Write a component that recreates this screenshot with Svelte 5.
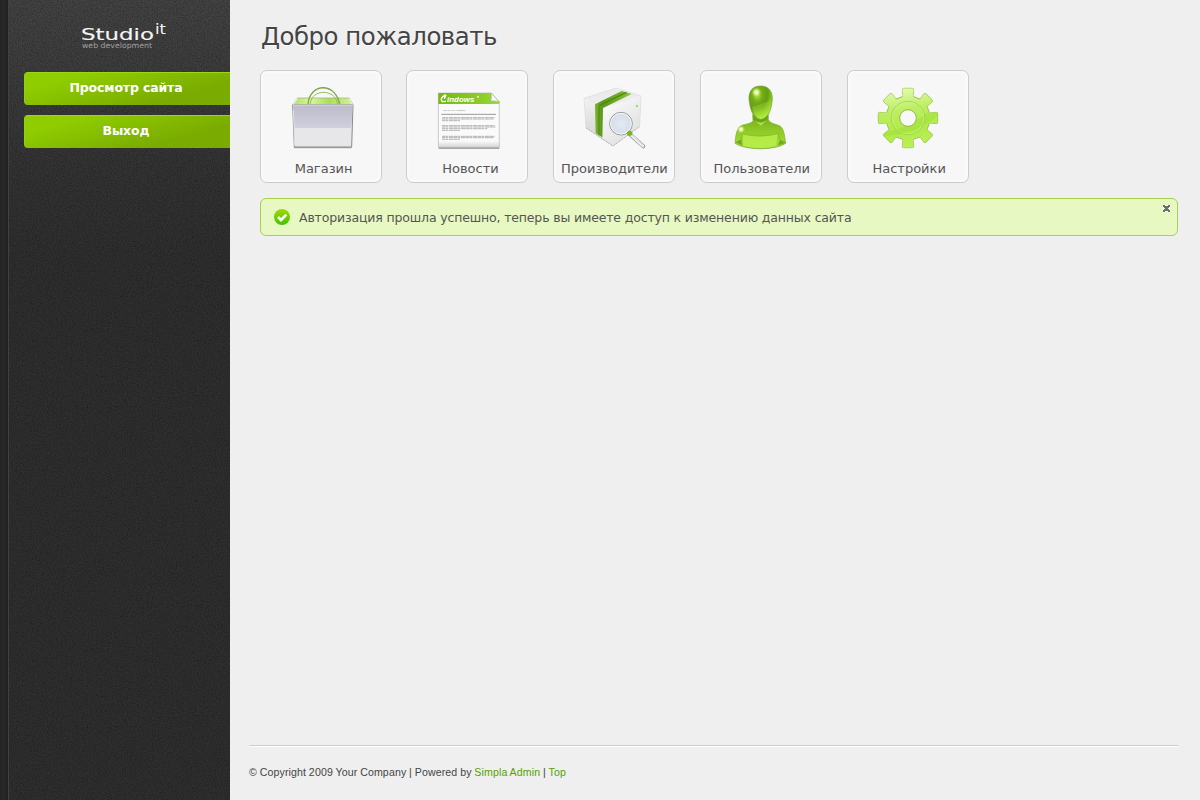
<script>
  const cards = [
    { id: 'shop', label: 'Магазин', box: '18 33 360 264' },
    { id: 'news', label: 'Новости', box: '21 33 360 264' },
    { id: 'makers', label: 'Производители', box: '18 33 360 264' },
    { id: 'users', label: 'Пользователи', box: '18 33 360 264' },
    { id: 'settings', label: 'Настройки', box: '24 33 360 264' }
  ];
  const angles = [0, 45, 90, 135, 180, 225, 270, 315];
  const newsLines = [173, 177, 182, 197, 201, 206, 211, 229, 233, 238];
  const newsEnds = [284, 282, 180, 284, 286, 262, 180, 284, 282, 180];
</script>

<div class="page">
  <aside>
    <svg class="grain" width="230" height="800" aria-hidden="true">
      <filter id="noise" x="0" y="0" width="100%" height="100%">
        <feTurbulence type="fractalNoise" baseFrequency="0.8" numOctaves="2" seed="4" />
        <feColorMatrix type="matrix" values="0 0 0 0 0  0 0 0 0 0  0 0 0 0 0  0.6 0 0 0 -0.21" />
      </filter>
      <rect x="9" width="221" height="800" filter="url(#noise)" />
    </svg>
    <div class="inner">
      <svg class="logo" width="90" height="30" viewBox="0 0 90 30">
        <text x="1" y="19" font-size="16.5" fill="#f4f4f4" stroke="#f4f4f4" stroke-width=".15" textLength="73" lengthAdjust="spacingAndGlyphs">Studio</text>
        <text x="75" y="12.5" font-size="14" fill="#f4f4f4" textLength="11" lengthAdjust="spacingAndGlyphs">it</text>
        <text x="2" y="26.5" font-size="7.5" fill="#a0a0a0" textLength="70" lengthAdjust="spacingAndGlyphs">web development</text>
      </svg>
      <nav>
        <a href="#site">Просмотр сайта</a>
        <a href="#exit">Выход</a>
      </nav>
    </div>
  </aside>

  <main>
    <h1>Добро пожаловать</h1>
    <ul class="cards">
      {#each cards as card}
        <li class={card.id}>
          <svg width="120" height="88" viewBox={card.box}>
            {#if card.id === 'shop'}
              <defs>
                <linearGradient id="bagTop" x2="0" y2="1"><stop stop-color="#bbbbc9" /><stop offset="1" stop-color="#cfcfdd" /></linearGradient>
                <linearGradient id="bagIn"><stop stop-color="#b5df69" /><stop offset=".3" stop-color="#d5f797" /><stop offset=".6" stop-color="#aade58" /><stop offset="1" stop-color="#d3f496" /></linearGradient>
              </defs>
              <path d="M114 134 127 114H283L294 134Z" fill="url(#bagIn)" stroke="#a1a78f" stroke-width="2" />
              <path d="M159 132C165 69 240 65 254 132" fill="none" stroke="#83a344" stroke-width="4" />
              <path d="M166 132C169 84 244 87 247 132" fill="none" stroke="#98bc5b" stroke-width="3" />
              <path d="M117 263H290" stroke="#aaa" stroke-width="4" />
              <path d="M113 134H294L290 261H118Z" fill="#e7e7e9" stroke="#8a8a8d" stroke-width="3" />
              <path d="M115 135H292L290 204H118Z" fill="url(#bagTop)" />
              <path d="M114 135H293M119 257 115 150" fill="none" stroke="#f6f6f6" stroke-width="2" />
              <path d="m127 115-11 18M282 115l10 18" stroke="#f4fbe5" stroke-width="3" />
            {:else if card.id === 'news'}
              <defs>
                <linearGradient id="paper" x2="0" y2="1"><stop offset=".88" stop-color="#fafafa" /><stop offset="1" stop-color="#d5d5d5" /></linearGradient>
                <linearGradient id="band"><stop stop-color="#77b914" /><stop offset=".7" stop-color="#8bcc28" /><stop offset="1" stop-color="#9bdc35" /></linearGradient>
              </defs>
              <path d="M116 264H298" stroke="#8d8d8d" stroke-width="4" />
              <path d="M115 99H274L298 125V262H115Z" fill="url(#paper)" stroke="#b7b7b7" stroke-width="2" />
              <path d="M115 99H274L298 125V132H115Z" fill="url(#band)" />
              <path d="M274 99c0 14-1 20-1 25 8-2 18-1 25 2Z" fill="#fafafa" stroke="#a4b78e" stroke-width="2" />
              <path d="M137 104q-20 11-10 21l11-1M138 105l-5 11" fill="none" stroke="white" stroke-width="4" />
              <text x="141" y="125" class="masthead" textLength="82" lengthAdjust="spacingAndGlyphs">indows</text>
              <circle cx="234" cy="110" r="3" fill="#e9f9cb" />
              <text x="129" y="153" class="caption" textLength="68">This is a free illustration</text>
              <path d="M124 163H288" stroke="#999" stroke-width="3" />
              {#each newsLines as y, i}
                <path d={`M126 ${y}H${newsEnds[i]}`} stroke="#a5a5a5" stroke-width="2.5" stroke-dasharray="11 1 6 2 15 1" />
              {/each}
            {:else if card.id === 'makers'}
              <defs>
                <linearGradient id="boxLeft" x2="0" y2="1"><stop stop-color="#f1f1f1" /><stop offset="1" stop-color="#cfcfcf" /></linearGradient>
                <linearGradient id="boxRight" x2=".7" y2="1"><stop stop-color="#fff" /><stop offset="1" stop-color="#dedede" /></linearGradient>
                <linearGradient id="ribbon"><stop stop-color="#7bb52d" /><stop offset=".2" stop-color="#5b981b" /><stop offset=".6" stop-color="#70ad26" /><stop offset="1" stop-color="#8cc63e" /></linearGradient>
                <radialGradient id="lens"><stop stop-color="#e2eaf4" /><stop offset="1" stop-color="#d3dce8" /></radialGradient>
              </defs>
              <path d="M108 115 205 84 279 108 167 151Z" fill="#ececec" />
              <path d="M108 115 167 151 195 258 114 204Z" fill="url(#boxLeft)" />
              <path d="M165 144 279 108 275 199 195 258 163 235Z" fill="url(#boxRight)" />
              <path d="M108 115 205 84 279 108 275 199 195 258 114 204Z" fill="none" stroke="#d2d2d2" stroke-width="1.5" />
              <path d="M114 204 195 258 275 200" fill="none" stroke="#888" stroke-width="2" stroke-dasharray="3 3" />
              <path d="M141 133 221 93 251 102 165 144 163 232 143 220Z" fill="url(#ribbon)" />
              <path d="M153 137 235 97" stroke="#4f8716" stroke-width="4" />
              <path d="M153 139V226" stroke="#4f8716" stroke-width="3" />
              <circle cx="267" cy="138" r="3" fill="#8dcc38" />
              <path d="m248 225 38 34" stroke="#999" stroke-width="12" stroke-linecap="round" />
              <path d="m249 225 36 33" stroke="#f8f8f8" stroke-width="8" stroke-linecap="round" />
              <path d="m252 226 34 32" stroke="#bbb" stroke-width="2" />
              <circle cx="219" cy="191" r="34" fill="url(#lens)" stroke="#999" stroke-width="3" />
              <circle cx="219" cy="191" r="31" fill="none" stroke="#f8f8f8" stroke-width="3" />
              <circle cx="245" cy="220" r="8" fill="#70b91e" />
            {:else if card.id === 'users'}
              <defs>
                <radialGradient id="head" cx=".35" cy=".25" r=".9"><stop stop-color="#b8e745" /><stop offset=".25" stop-color="#74ad19" /><stop offset=".5" stop-color="#639d14" /><stop offset=".8" stop-color="#a0dc2b" /><stop offset="1" stop-color="#8ac51f" /></radialGradient>
                <linearGradient id="face" x1=".3" x2=".6" y2="1"><stop stop-color="#8cc626" stop-opacity=".2" /><stop offset="1" stop-color="#b2ee42" /></linearGradient>
                <linearGradient id="body" x2="0" y2="1"><stop stop-color="#71aa18" /><stop offset=".5" stop-color="#91cb28" /><stop offset="1" stop-color="#a5dc37" /></linearGradient>
                <radialGradient id="shine"><stop stop-color="white" /><stop offset=".3" stop-color="#eaffb5" /><stop offset="1" stop-color="#a9dd3b" stop-opacity="0" /></radialGradient>
              </defs>
              <path d="M120 250q75 36 153 0-76 12-153 0" fill="#aaa" opacity=".5" />
              <path d="M173 164h47v15c5 10 19 13 34 18 13 8 15 31 18 53-27 21-122 22-152 0 2-24 5-48 21-54 15-5 28-5 33-14Z" fill="url(#body)" stroke="#7bab32" stroke-width="2" />
              <path d="M175 164h42v14l-20 15-21-13Z" fill="#6ba21a" />
              <path d="M178 181q18 13 38-1l-18 17Z" fill="#abe341" />
              <path d="M143 222q54 14 105-1l-4 36q-47 14-99 0Z" fill="#bbf04e" opacity=".8" />
              <path d="m122 247 16-9 4 19ZM272 248l-17-9-6 18Z" fill="#568e14" opacity=".6" />
              <path d="M143 222q51 13 105-1M138 238l5-19M254 238l-5-19" fill="none" stroke="#7fb629" stroke-width="2" />
              <path d="M197 78c25 0 36 18 35 40-2 20-7 57-35 61-28-6-32-39-35-61-1-25 11-40 35-40Z" fill="url(#head)" stroke="#759b32" stroke-width="2" />
              <path d="M171 140q29-4 58-24-2 54-31 61-20-5-27-37Z" fill="url(#face)" />
              <circle cx="184" cy="97" r="15" fill="url(#shine)" />
              <circle cx="138" cy="208" r="13" fill="url(#shine)" />
            {:else}
              <defs>
                <linearGradient id="gear" gradientUnits="userSpaceOnUse" x1="190" y1="84" x2="220" y2="264"><stop stop-color="#e2fbb0" /><stop offset=".35" stop-color="#bdee62" /><stop offset=".7" stop-color="#b0eb48" /><stop offset="1" stop-color="#bcf05c" /></linearGradient>
                <path id="tooth" d="M174 122c9-5 15-9 15-16l-2-17q0-4 4-4h26q4 0 4 4l-2 17c0 7 6 11 15 16Z" />
                <clipPath id="gearClip">
                  <circle cx="204" cy="174" r="64" />
                  {#each angles as a}
                    <use href="#tooth" transform={`rotate(${a} 204 174)`} />
                  {/each}
                </clipPath>
              </defs>
              <g fill="#b9ec61" stroke="#94bd4c" stroke-width="3" stroke-linejoin="round">
                {#each angles as a}
                  <use href="#tooth" transform={`rotate(${a} 204 174)`} />
                {/each}
                <circle cx="204" cy="174" r="66" />
              </g>
              <g clip-path="url(#gearClip)">
                <rect x="110" y="80" width="188" height="188" fill="url(#gear)" />
                <path d="M110 220q90-5 188-90v34q-70 62-188 67Z" fill="#93d42c" opacity=".3" />
              </g>
              <circle cx="204" cy="174" r="50" fill="none" stroke="#94c448" stroke-width="2" />
              <circle cx="204" cy="174" r="48" fill="none" stroke="#caf37e" stroke-width="2" />
              <circle cx="204" cy="174" r="25" fill="#f8f8f8" stroke="#8fba46" stroke-width="3" />
            {/if}
          </svg>
          <span>{card.label}</span>
        </li>
      {/each}
    </ul>

    <div class="notice">
      <svg class="tick" width="16" height="16" viewBox="0 0 16 16">
        <defs><linearGradient id="ok" x2="0" y2="1"><stop stop-color="#a4d900" /><stop offset="1" stop-color="#3fc400" /></linearGradient></defs>
        <circle cx="8" cy="8" r="8" fill="url(#ok)" />
        <path d="m4 8 3 3 5.3-5.4" fill="none" stroke="white" stroke-width="2.7" />
      </svg>
      <p>Авторизация прошла успешно, теперь вы имеете доступ к изменению данных сайта</p>
      <svg class="close" width="7" height="7" viewBox="0 0 7 7" shape-rendering="crispEdges">
        <path d="M0 0h2v1h3V0h2v2H6v1H5v1h1v1h1v2H5V6H2v1H0V5h1V4h1V3H1V2H0Z" fill="#707070" />
        <path d="M2 0h3v1H2ZM2 6h3v1H2ZM0 2h1v3H0ZM6 2h1v3H6Z" fill="white" />
      </svg>
    </div>

    <footer>
      <small>© Copyright 2009 Your Company | Powered by <a href="#simpla">Simpla Admin</a> | <a href="#top">Top</a></small>
    </footer>
  </main>
</div>

<style>
  :global(body) { margin: 0; background: #efefef; }
  .page { display: flex; height: 800px; overflow: hidden; font: 13px/18px Verdana, "DejaVu Sans", sans-serif; color: #555; }
  aside { position: relative; flex: none; width: 230px; background: linear-gradient(90deg, #252525 0 2px, #292929 3px 4px, #252525 5px 7px, #202020 7px 8px, #414141 8px 9px, transparent 9px), linear-gradient(#444, #3e3e3e 65px, #343434 165px, #2f2f2f 260px); }
  .grain { position: absolute; inset: 0; }
  .inner { position: relative; display: flex; flex-direction: column; padding: 21px 0 0 24px; }
  .logo { margin-left: 56px; font-family: "DejaVu Sans", sans-serif; }
  nav { display: flex; flex-direction: column; gap: 10px; margin-top: 21px; }
  nav a { box-sizing: border-box; height: 33px; padding: 6px 3px 0 0; border-top: 1px solid #9bd813; border-left: 1px solid #93d00b; border-radius: 4px 0 0 4px; background: linear-gradient(165deg, #8fcc00 20%, #79ab00 75%); color: #fff; font-weight: bold; text-align: center; text-decoration: none; font-size: 12.5px; line-height: 17px; letter-spacing: -.15px; }
  main { flex: 1; display: flex; flex-direction: column; box-sizing: border-box; padding: 20px 22px 20px 19px; }
  h1 { margin: 0 0 0 12px; padding-top: 1px; font-size: 24.4px; line-height: 32px; font-weight: normal; color: #444; text-shadow: 0 1px 0 #fff; white-space: nowrap; letter-spacing: -.47px; }
  .cards { display: flex; gap: 24.9px; margin: 17px 0 0 10.6px; padding: 0; list-style: none; }
  li { box-sizing: border-box; flex: none; width: 122px; height: 113px; border: 1px solid #ccc; border-radius: 7px; background: #f7f7f7; box-shadow: inset 0 0 0 2px #fafafa; display: flex; flex-direction: column; align-items: center; }
  li svg { display: block; flex: none; }
  li span { margin: 1px 0 0 6px; white-space: nowrap; line-height: 18px; }
  .makers span { margin-left: 0; }
  .users span { margin-left: 1px; }
  .settings span { margin-left: 2px; }
  .masthead { font: italic bold 22px "Liberation Sans", sans-serif; fill: #fff; }
  .caption { font: 6px "Liberation Sans", sans-serif; fill: #777; }
  .notice { display: flex; align-items: center; position: relative; box-sizing: border-box; height: 38px; margin: 15px 0 0 11px; padding: 0 13px; border: 1px solid #a5d24a; border-radius: 6px; background: #e7f8c2; }
  .notice p { margin: 0 0 0 9px; padding-top: 2px; white-space: nowrap; font-size: 12.5px; letter-spacing: -.155px; }
  .close { position: absolute; right: 7px; top: 6px; }
  footer { margin-top: auto; border-top: 1px solid #ccc; box-shadow: inset 0 1px #fff; padding-top: 19px; height: 15px; }
  small { display: block; font: 10.6px/15px "Liberation Sans", Arial, sans-serif; letter-spacing: .12px; word-spacing: -.3px; white-space: nowrap; color: #444; }
  small a { color: #57a000; text-decoration: none; }
</style>
